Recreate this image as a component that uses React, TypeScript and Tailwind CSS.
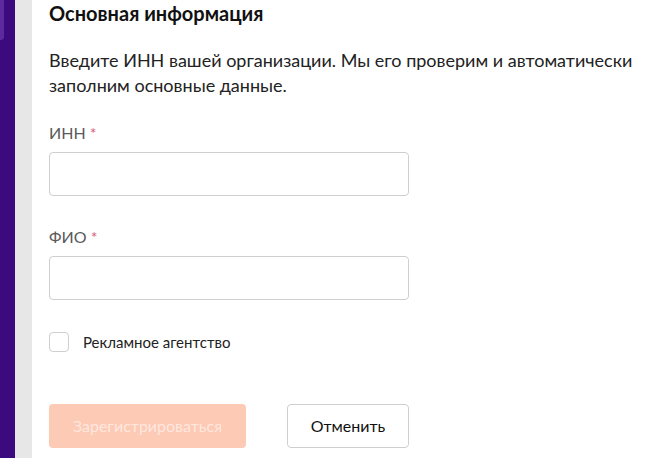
import React from "react";

export default function App() {
  return (
    <div className="flex h-[458px] w-[650px] overflow-hidden bg-white" style={{ fontFamily: "Lato, 'Open Sans', sans-serif" }}>
      <div className="relative w-[15px] shrink-0 bg-[#3a0a7e]">
        <div className="h-[40px] w-[4px] rounded-br-[3px] bg-[#5b2aa0]" />
      </div>
      <div className="w-[17px] shrink-0 bg-[#e7e7e7]" />
      <div className="flex flex-1 flex-col pl-[17px]">
        <h1 className="pt-[1px] text-[20px] font-bold leading-[24px] text-[#111]">Основная информация</h1>
        <p className="mt-[23px] text-[18px] leading-[25px] text-[#222]">
          Введите ИНН вашей организации. Мы его проверим и автоматически
          <br />
          заполним основные данные.
        </p>
        <label className="mt-[25px] text-[16px] leading-[20px] text-[#5a5a5a]">
          ИНН <span className="text-[#d4607a]">*</span>
        </label>
        <input className="mt-[9px] h-[44px] w-[360px] rounded-[4px] border border-[#cfcfcf] bg-white px-3 outline-none" />
        <label className="mt-[31px] text-[16px] leading-[20px] text-[#5a5a5a]">
          ФИО <span className="text-[#d4607a]">*</span>
        </label>
        <input className="mt-[9px] h-[44px] w-[360px] rounded-[4px] border border-[#cfcfcf] bg-white px-3 outline-none" />
        <div className="mt-[32px] flex items-center gap-[14px]">
          <div className="h-[20px] w-[20px] rounded-[4px] border border-[#cfcfcf] bg-white" />
          <span className="text-[15px] leading-[20px] text-[#222]">Рекламное агентство</span>
        </div>
        <div className="mt-[52px] flex gap-[41px]">
          <button className="h-[44px] w-[197px] rounded-[4px] bg-[#fdcab6] text-[16px] text-[#fee7de]">
            Зарегистрироваться
          </button>
          <button className="h-[44px] w-[122px] rounded-[4px] border border-[#cfcfcf] bg-white text-[16px] text-[#111]">
            Отменить
          </button>
        </div>
      </div>
    </div>
  );
}
